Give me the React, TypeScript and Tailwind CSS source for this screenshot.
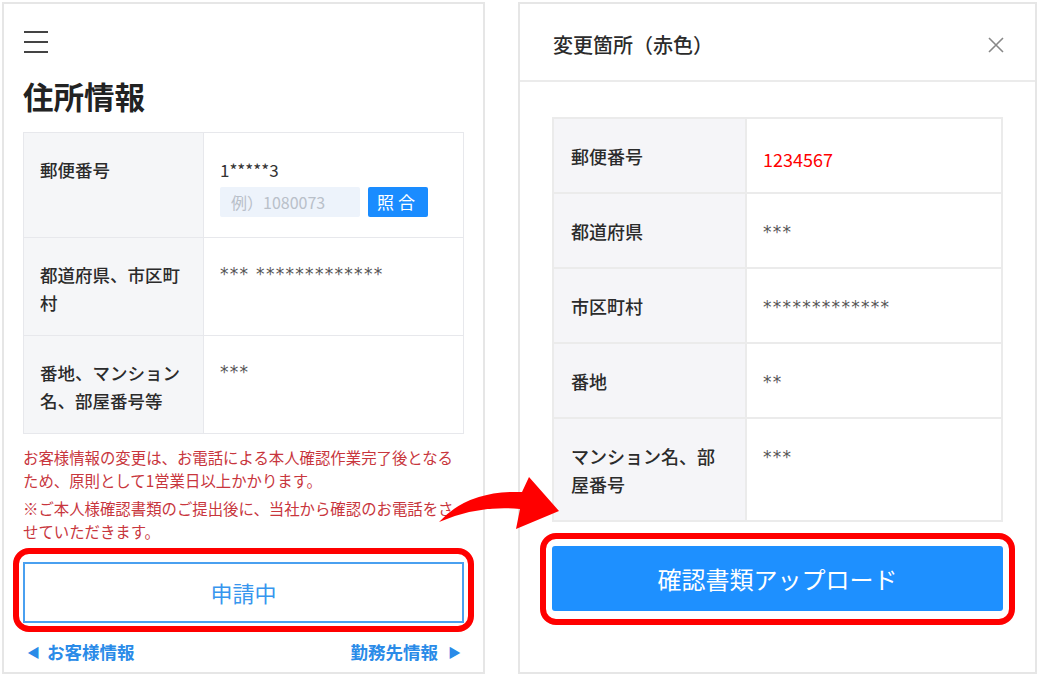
const jp = { fontFamily: '"Noto Sans CJK JP", "Noto Sans", sans-serif' }

function LeftRow({ label, children, h }: { label: string; children: React.ReactNode; h: string }) {
  return (
    <div className={`flex border-b border-[#e7e8ec] last:border-b-0 ${h}`}>
      <div className="w-[180px] shrink-0 border-r border-[#e7e8ec] bg-[#f5f6f8] pl-4 pr-4 pt-[23px] text-[17.5px] font-medium leading-[28px] text-[#2b2b2b]">
        {label}
      </div>
      <div className="flex-1 pl-4 pt-[23px]">{children}</div>
    </div>
  )
}

function Stars({ text }: { text: string }) {
  return (
    <span className="font-['DejaVu_Sans',sans-serif] text-[17px] leading-[24px] tracking-[1.3px] text-[#555]">{text}</span>
  )
}

function RightRow({ label, value, red }: { label: React.ReactNode; value: string; red?: boolean }) {
  return (
    <div className="flex border-b-2 border-[#ebebeb] last:border-b-0">
      <div className="w-[193px] shrink-0 border-r-2 border-[#ebebeb] bg-[#f5f5f8] pl-[17px] pr-[28px] pt-[23px] pb-[22px] text-[18px] font-medium leading-[28px] text-[#2b2b2b]">
        {label}
      </div>
      <div className={`flex-1 pl-4 leading-[28px] ${red ? 'pt-[26px] text-[18px] text-[#ff0000]' : 'pt-[23px]'}`}>
        {red ? value : <Stars text={value} />}
      </div>
    </div>
  )
}

export default function App() {
  return (
    <div className="relative h-[676px] w-[1038px] overflow-hidden bg-white" style={jp}>
      <div className="flex gap-[33px] pl-[2px] pt-[2px]">
        {/* left panel */}
        <div className="flex h-[672px] w-[483px] flex-col border-2 border-[#e6e6e6] px-[19px]">
          <svg className="mt-[27px] ml-[1px]" width="24" height="22" viewBox="0 0 24 22">
            <path d="M0 1h24M0 11h24M0 21h24" stroke="#444" strokeWidth="2" />
          </svg>
          <h1 className="mt-[23px] text-[30.5px] font-bold leading-[40px] text-[#222]">住所情報</h1>
          <div className="mt-4 border border-[#e7e8ec]">
            <LeftRow label="郵便番号" h="h-[105px]">
              <div className="text-[17px] leading-[28px] text-[#333]">1*****3</div>
              <div className="mt-[3px] flex">
                <div className="flex h-[30px] w-[140px] items-center rounded-[2px] bg-[#edf3fb] pl-[11px] text-[16px] text-[#b9c0c9]">
                  例）1080073
                </div>
                <button className="ml-2 h-[30px] w-[60px] rounded-[2px] bg-[#1a8cff] text-[17px] tracking-[4px] text-white">
                  照合
                </button>
              </div>
            </LeftRow>
            <LeftRow label="都道府県、市区町村" h="h-[98px]">
              <Stars text="*** *************" />
            </LeftRow>
            <LeftRow label="番地、マンション名、部屋番号等" h="h-[97px]">
              <Stars text="***" />
            </LeftRow>
          </div>
          <div className="mt-3 text-[15.4px] leading-[23px] text-[#c8363d]">
            <p>お客様情報の変更は、お電話による本人確認作業完了後となるため、原則として1営業日以上かかります。</p>
            <p className="mt-[5px]">※ご本人様確認書類のご提出後に、当社から確認のお電話をさせていただきます。</p>
          </div>
          <div className="-mx-[10px] mt-[5px] rounded-[16px] border-[6px] border-[#ff0000] px-[4px] pt-[8px] pb-[3px]">
            <button className="flex h-[61px] w-full items-center justify-center border-2 border-[#4aa0f0] bg-white text-[22px] text-[#3796ee]">
              申請中
            </button>
          </div>
          <div className="mt-[8px] flex items-center justify-between pl-[4px] pr-[3px] text-[17.5px] font-bold leading-[24px] text-[#2a8be8]">
            <span className="flex items-center gap-[7px]">
              <span className="text-[13px]">◀</span>お客様情報
            </span>
            <span className="flex items-center gap-[10px]">
              勤務先情報<span className="text-[13px]">▶</span>
            </span>
          </div>
        </div>

        {/* right panel */}
        <div className="flex h-[672px] w-[519px] flex-col border-2 border-[#e6e6e6]">
          <div className="flex h-[78px] items-center justify-between border-b-2 border-[#ebebeb] pl-[33px] pr-[31px] pt-[5px]">
            <span className="text-[20px] font-medium text-[#2b2b2b]">変更箇所（赤色）</span>
            <svg width="16" height="16" viewBox="0 0 16 16">
              <path d="M1 1l14 14M15 1L1 15" stroke="#888" strokeWidth="1.6" />
            </svg>
          </div>
          <div className="px-[32px] pt-[35px]">
            <div className="border-2 border-[#ebebeb]">
              <RightRow label="郵便番号" value="1234567" red />
              <RightRow label="都道府県" value="***" />
              <RightRow label="市区町村" value="*************" />
              <RightRow label="番地" value="**" />
              <RightRow label="マンション名、部屋番号" value="***" />
            </div>
            <div className="-mx-[12px] mt-[11px] rounded-[16px] border-[6px] border-[#ff0000] px-[6px] pt-[7px] pb-[8px]">
              <button className="flex h-[65px] w-full items-center justify-center rounded-[3px] bg-[#1e90ff] text-[24px] text-white">
                確認書類アップロード
              </button>
            </div>
          </div>
        </div>
      </div>

      {/* curved arrow */}
      <svg className="pointer-events-none absolute left-0 top-0" width="1038" height="676" viewBox="0 0 1038 676">
        <path d="M439 522 Q468 490 522 492 L529 477 L559 511 L516 529 L520 509 Q478 505 439 522 Z" fill="#ff0000" />
      </svg>
    </div>
  )
}
